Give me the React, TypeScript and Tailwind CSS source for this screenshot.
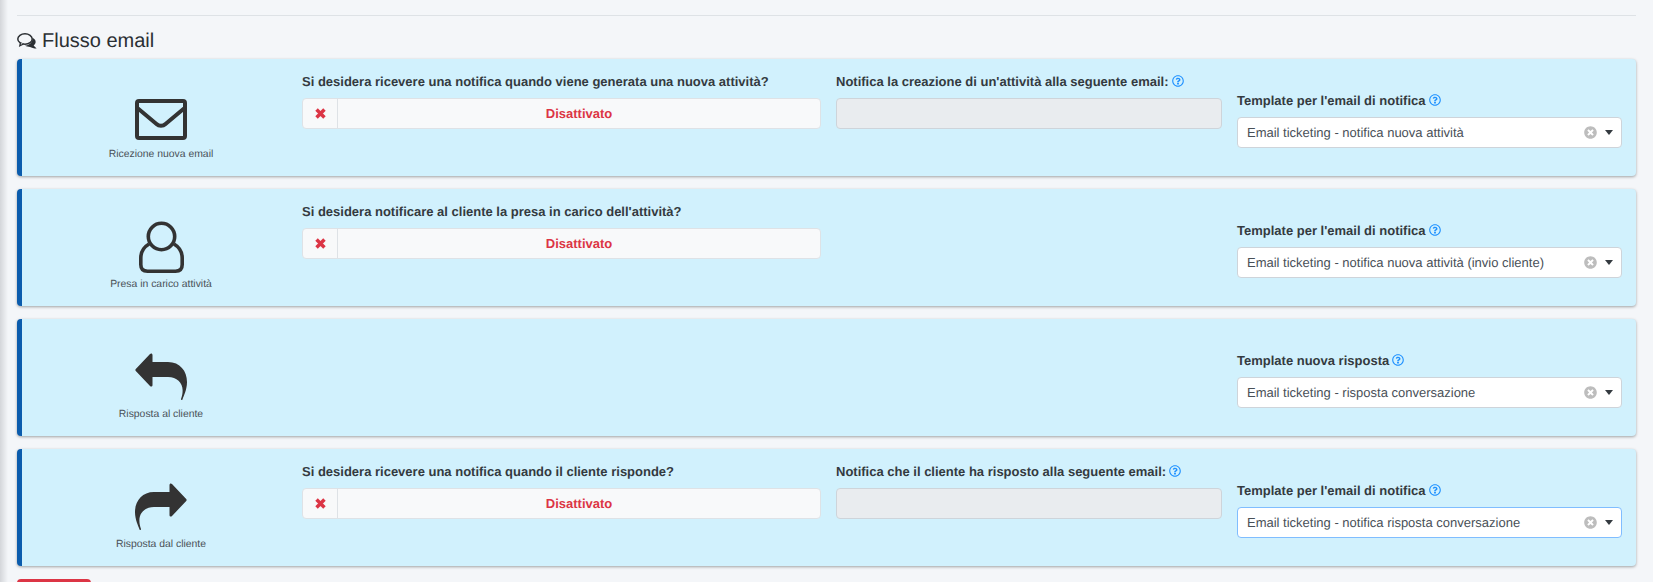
import { FaRegQuestionCircle, FaTimesCircle } from 'react-icons/fa'
import type { ReactNode } from 'react'

function Help() {
  return <FaRegQuestionCircle className="inline-block ml-[3px] w-[12px] h-[12px] text-[#1e90ff] align-[-1px]" />
}

function CommentsIcon() {
  return (
    <svg viewBox="0 0 20 16" className="w-[20px] h-[16px] mr-[5px]" fill="none" stroke="currentColor">
      <ellipse cx="8" cy="6" rx="7.2" ry="5.2" strokeWidth="1.5" />
      <path d="M3.5 10 L2.8 12.8 L6.5 11" strokeWidth="1.3" fill="#f4f6f9" />
      <path d="M15.6 4.8 C17.6 6 19 7.5 18.6 9.6 C18.3 11 17.4 12 16.6 12.6 L19.6 15.6 C16.8 15.6 14.6 14.8 13 14 C11.4 14 9.4 13.6 8 12.6 C12 12.6 15.8 9.6 15.6 4.8 Z" fill="currentColor" stroke="none" />
    </svg>
  )
}

function EnvelopeIcon() {
  return (
    <svg viewBox="0 0 52 41" className="w-[52px] h-[41px] mt-[4px]" fill="none" stroke="currentColor" strokeWidth="4" strokeLinejoin="round" strokeLinecap="round">
      <rect x="2" y="2" width="48" height="37" rx="2" />
      <path d="M3 9.5 L21.5 25 C24 27.4 28 27.4 30.5 25 L49 9.5" />
    </svg>
  )
}

function UserIcon() {
  return (
    <svg viewBox="0 0 45 52" className="w-[45px] h-[52px]" fill="none" stroke="currentColor" strokeWidth="3.6" strokeLinejoin="round">
      <circle cx="22.5" cy="15.5" r="13.2" />
      <path d="M10 23 C5 26 1.8 30 1.8 37 L1.8 43.5 C1.8 48 4.5 50.2 8.5 50.2 L36.5 50.2 C40.5 50.2 43.2 48 43.2 43.5 L43.2 37 C43.2 30 40 26 35 23" />
    </svg>
  )
}

function ReplyIcon({ mirrored }: { mirrored?: boolean }) {
  return (
    <svg viewBox="0 0 52 47" className={`w-[52px] h-[47px] mb-[1px] ${mirrored ? '-scale-x-100' : ''}`} fill="currentColor">
      <path d="M0.8 16 L15 1 C16 0 17.5 0.4 17.5 2 L17.5 9 L33 9 C45 9 52 18 52 29 C52 37 48.5 43 47.5 46.5 C47.2 47.3 46 47.3 46 46 C47 43 47.6 41 47.6 38 C48 30 42 24 33 24 L17.5 24 L17.5 32 C17.5 33.6 16 34 15 33 L0.8 18 C0.2 17.4 0.2 16.6 0.8 16 Z" />
    </svg>
  )
}

function XIcon() {
  return (
    <svg viewBox="0 0 10 10" className="w-[11px] h-[11px]" stroke="currentColor" strokeWidth="3.2" strokeLinecap="butt">
      <path d="M1.4 1.4 L8.6 8.6 M8.6 1.4 L1.4 8.6" />
    </svg>
  )
}

function Toggle({ label }: { label: string }) {
  return (
    <div>
      <div className="font-bold mb-[6px] leading-[20px]">{label}</div>
      <div className="flex h-[31px] rounded-[4px] border border-[#dee2e6] bg-[#f8f9fa]">
        <span className="w-[35px] flex items-center justify-center border-r border-[#dee2e6] text-[#dc3545]">
          <XIcon />
        </span>
        <span className="flex-1 flex items-center justify-center font-bold text-[#dc3545]">Disattivato</span>
      </div>
    </div>
  )
}

function Mail({ label }: { label: string }) {
  return (
    <div>
      <div className="font-bold mb-[6px] leading-[20px]">{label}<Help /></div>
      <div className="h-[31px] rounded-[4px] border border-[#ced4da] bg-[#e9ecef]" />
    </div>
  )
}

function Template({ label, value, focused }: { label: string; value: string; focused?: boolean }) {
  return (
    <div>
      <div className="font-bold mb-[6px] leading-[20px]">{label}<Help /></div>
      <div className={`flex items-center h-[31px] rounded-[4px] border bg-white pl-[9px] pr-[8px] text-[#495057] ${focused ? 'border-[#80bdff]' : 'border-[#ced4da]'}`}>
        <span className="flex-1">{value}</span>
        <FaTimesCircle className="w-[13px] h-[13px] text-[#bdbdbd] mr-[8px]" />
        <span className="w-0 h-0 border-x-[4.5px] border-x-transparent border-t-[5px] border-t-[#343a40]" />
      </div>
    </div>
  )
}

function Row({ icon, caption, toggle, mail, template }: { icon: ReactNode; caption: string; toggle?: ReactNode; mail?: ReactNode; template: ReactNode }) {
  return (
    <div className="grid grid-cols-[280px_534px_401px_1fr] h-[117px] bg-[#d1f1fd] border-l-[5px] border-[#0b5cad] rounded-[4px] shadow-[0_1px_3px_rgba(0,0,0,0.35)]">
      <div className="flex flex-col items-center justify-end pb-[13px] pr-[2px]">
        <div className="h-[56px] flex items-center justify-center text-[#333333]">{icon}</div>
        <div className="text-[10.4px] text-[#495057] leading-[16px] mt-[2px]">{caption}</div>
      </div>
      <div className="pt-[13px] pr-[15px]">{toggle}</div>
      <div className="pt-[13px] pr-[15px]">{mail}</div>
      <div className="pt-[32px] pr-[14px]">{template}</div>
    </div>
  )
}

export default function App() {
  return (
    <div className="relative h-[582px] overflow-hidden bg-[#f4f6f9] font-['Liberation_Sans',Arial,sans-serif] text-[13px] text-[#343a40] [text-rendering:geometricPrecision]">
      {/* sidebar shadow on the left edge */}
      <div className="absolute inset-y-0 left-0 w-[8px] bg-gradient-to-r from-[#d4d6da] to-transparent" />
      <div className="pl-[17px] pr-[17px]">
        <div className="h-[16px] border-b border-[#dee2e6]" />
        <h4 className="flex items-center h-[43px] pt-[6px] text-[20px] leading-none text-[#2b2f33]">
          <CommentsIcon />
          Flusso email
        </h4>
        <div className="flex flex-col gap-[13px]">
          <Row
            icon={<EnvelopeIcon />}
            caption="Ricezione nuova email"
            toggle={<Toggle label="Si desidera ricevere una notifica quando viene generata una nuova attività?" />}
            mail={<Mail label="Notifica la creazione di un'attività alla seguente email:" />}
            template={<Template label="Template per l'email di notifica" value="Email ticketing - notifica nuova attività" />}
          />
          <Row
            icon={<UserIcon />}
            caption="Presa in carico attività"
            toggle={<Toggle label="Si desidera notificare al cliente la presa in carico dell'attività?" />}
            template={<Template label="Template per l'email di notifica" value="Email ticketing - notifica nuova attività (invio cliente)" />}
          />
          <Row
            icon={<ReplyIcon />}
            caption="Risposta al cliente"
            template={<Template label="Template nuova risposta" value="Email ticketing - risposta conversazione" />}
          />
          <Row
            icon={<ReplyIcon mirrored />}
            caption="Risposta dal cliente"
            toggle={<Toggle label="Si desidera ricevere una notifica quando il cliente risponde?" />}
            mail={<Mail label="Notifica che il cliente ha risposto alla seguente email:" />}
            template={<Template label="Template per l'email di notifica" value="Email ticketing - notifica risposta conversazione" focused />}
          />
        </div>
        <div className="mt-[13px] w-[74px] h-[30px] rounded-[4px] bg-[#dc3545]" />
      </div>
    </div>
  )
}
